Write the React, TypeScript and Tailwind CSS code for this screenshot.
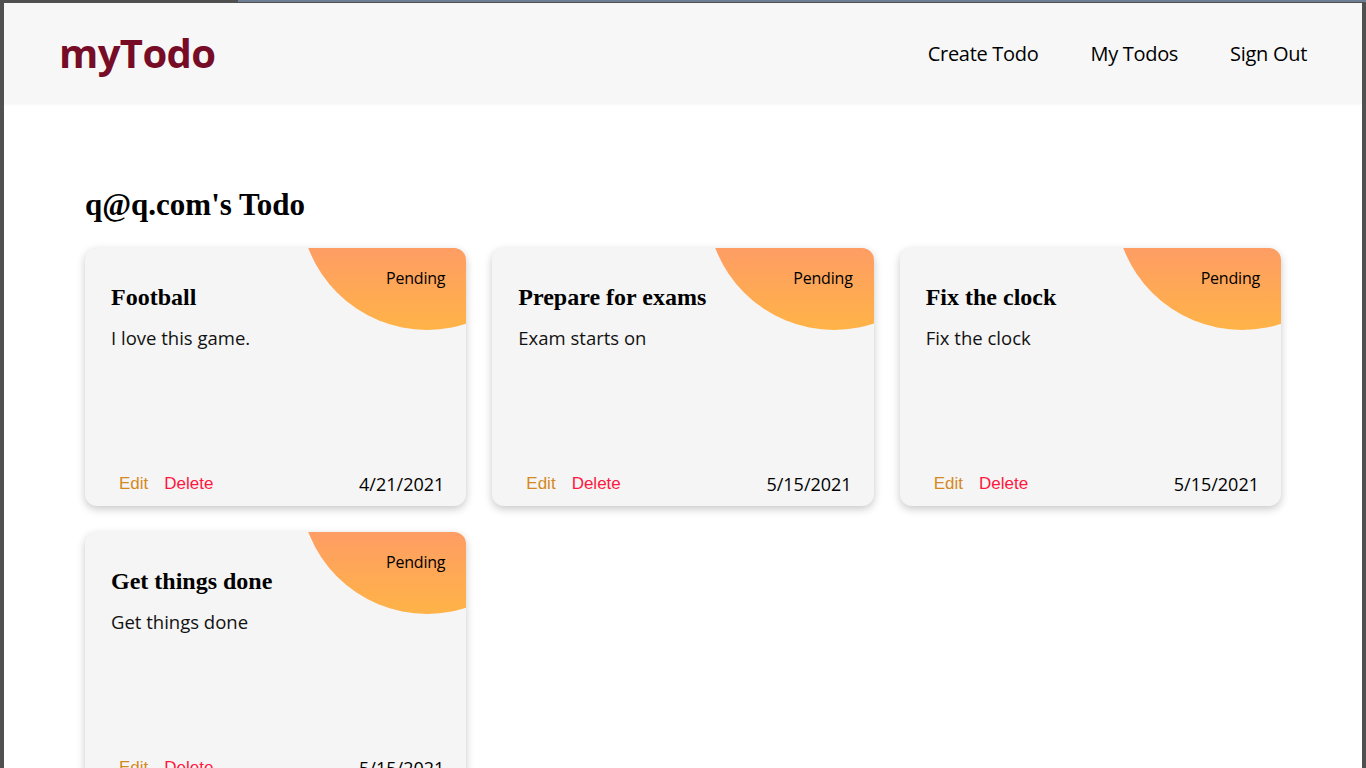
import React from "react";

type Todo = { title: string; desc: string; date: string };

const todos: Todo[] = [
  { title: "Football", desc: "I love this game.", date: "4/21/2021" },
  { title: "Prepare for exams", desc: "Exam starts on", date: "5/15/2021" },
  { title: "Fix the clock", desc: "Fix the clock", date: "5/15/2021" },
  { title: "Get things done", desc: "Get things done", date: "5/15/2021" },
];

function Card({ t }: { t: Todo }) {
  return (
    <div className="relative h-[258px] overflow-hidden rounded-[12px] bg-[#f5f5f5] shadow-[0_3px_8px_rgba(0,0,0,0.22)] flex flex-col">
      <div className="absolute left-[215px] top-[-172px] h-[254px] w-[254px] rounded-full bg-[linear-gradient(to_bottom,#fe9c66_66%,#ffb347_100%)]" />
      <div className="absolute right-[21px] top-[19px] text-[16px] leading-[22px] text-black font-['Open_Sans',sans-serif] tracking-[-0.2px]">
        Pending
      </div>
      <div className="relative pl-[26px] pt-[35px] font-['Liberation_Serif',serif] text-[24px] font-bold leading-[28px] text-black">
        {t.title}
      </div>
      <div className="relative pl-[26px] pt-[14px] font-['Open_Sans',sans-serif] text-[18.5px] leading-[26px] text-[#111]">
        {t.desc}
      </div>
      <div className="relative mt-auto flex items-center justify-between pb-[11px] pl-[34px] pr-[22px]">
        <div className="flex gap-[16px] font-['Liberation_Sans',sans-serif] text-[17px] leading-[22px]">
          <span className="text-[#d4891f]">Edit</span>
          <span className="text-[#ff173f]">Delete</span>
        </div>
        <span className="font-['Open_Sans',sans-serif] text-[18px] leading-[22px] text-black">
          {t.date}
        </span>
      </div>
    </div>
  );
}

export default function App() {
  return (
    <div className="relative h-[768px] w-[1366px] overflow-hidden bg-[#505050] pl-[4px] pr-[4px] pt-[3px]">
      <div className="absolute left-[238px] right-0 top-0 h-[2px] bg-[#6e7f95]" />
      <div className="h-[765px] overflow-hidden bg-white">
        <header className="flex h-[100px] items-center justify-between bg-[#f7f7f7] pl-[55px] pr-[55px] shadow-[0_1px_3px_rgba(0,0,0,0.06)]">
          <div className="font-['Open_Sans',sans-serif] text-[40px] font-bold leading-none tracking-[-0.6px] text-[#760c26]">
            myTodo
          </div>
          <nav className="flex gap-[52px] pt-[2px] font-['Open_Sans',sans-serif] text-[20px] tracking-[-0.3px] text-black">
            <span>Create Todo</span>
            <span>My Todos</span>
            <span>Sign Out</span>
          </nav>
        </header>
        <main className="px-[81px] pt-[85px]">
          <h1 className="font-['Liberation_Serif',serif] text-[31px] font-bold leading-[34px] text-black">
            q@q.com's Todo
          </h1>
          <div className="mt-[26px] grid grid-cols-3 gap-[26px]">
            {todos.map((t, i) => (
              <Card key={i} t={t} />
            ))}
          </div>
        </main>
      </div>
    </div>
  );
}
